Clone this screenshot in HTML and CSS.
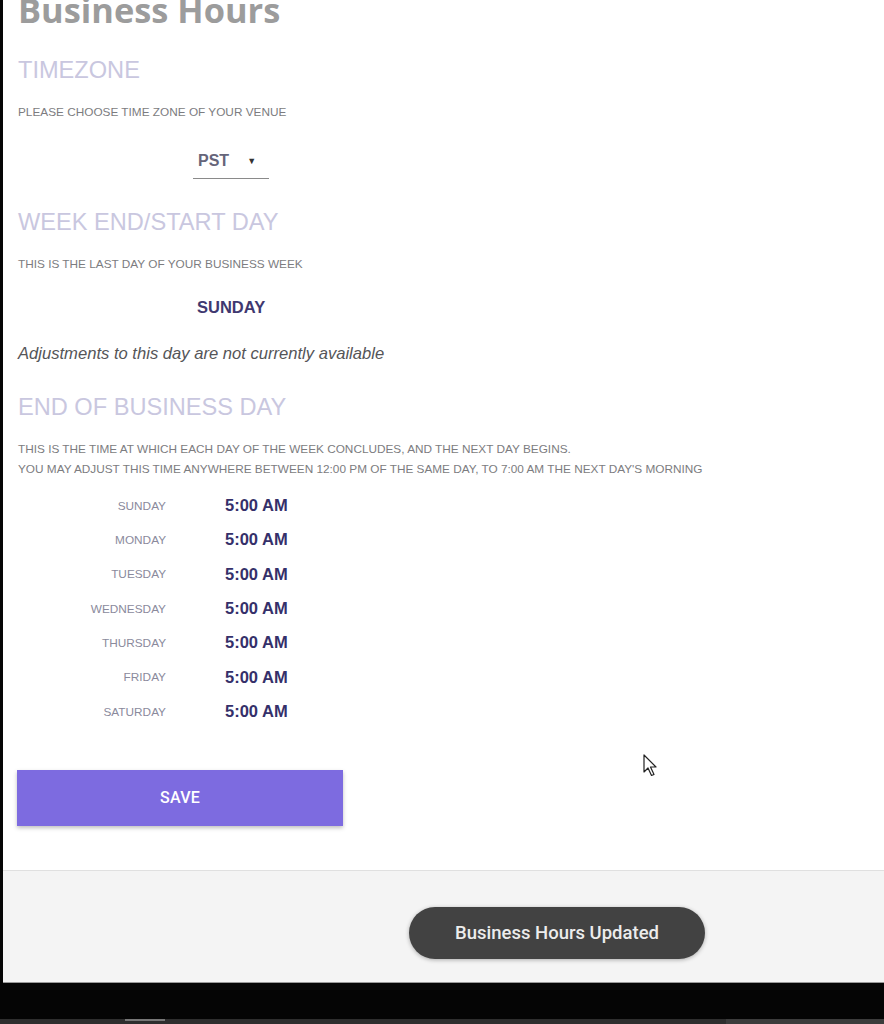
FILE: index.html
```html
<!DOCTYPE html>
<html>

	<head>
		<meta charset="UTF-8">
		<meta name="viewport" content="width=device-width,initial-scale=1" />
		<title>Business Hours</title>
		<link rel="stylesheet" href="styles.css">
	</head>

	<body>
		<div class="screen">
			<div class="content">
				<h1 class="title">Business Hours</h1>

				<h2 class="section-title">TIMEZONE</h2>
				<p class="hint">PLEASE CHOOSE TIME ZONE OF YOUR VENUE</p>
				<div class="select-wrap">
					<div class="select">
						<span>PST</span>
						<span class="arrow">&#9660;</span>
					</div>
				</div>

				<h2 class="section-title">WEEK END/START DAY</h2>
				<p class="hint">THIS IS THE LAST DAY OF YOUR BUSINESS WEEK</p>
				<div class="week-day">SUNDAY</div>
				<p class="note">Adjustments to this day are not currently available</p>

				<h2 class="section-title">END OF BUSINESS DAY</h2>
				<p class="hint">THIS IS THE TIME AT WHICH EACH DAY OF THE WEEK CONCLUDES, AND THE NEXT DAY BEGINS.<br>YOU MAY ADJUST THIS TIME ANYWHERE BETWEEN 12:00 PM OF THE SAME DAY, TO 7:00 AM THE NEXT DAY'S MORNING</p>

				<div class="days">
					<span class="day">SUNDAY</span><span class="time">5:00 AM</span>
					<span class="day">MONDAY</span><span class="time">5:00 AM</span>
					<span class="day">TUESDAY</span><span class="time">5:00 AM</span>
					<span class="day">WEDNESDAY</span><span class="time">5:00 AM</span>
					<span class="day">THURSDAY</span><span class="time">5:00 AM</span>
					<span class="day">FRIDAY</span><span class="time">5:00 AM</span>
					<span class="day">SATURDAY</span><span class="time">5:00 AM</span>
				</div>

				<button class="save">SAVE</button>
			</div>

			<div class="footer">
				<div class="toast">Business Hours Updated</div>
			</div>

			<!-- mouse pointer -->
			<svg class="cursor" width="15" height="23" viewBox="0 0 15 23">
				<path d="M1 1 L1 18 L5 14 L8.5 21.5 L11 20.5 L7.5 13 L13 13 Z" fill="#fff" stroke="#222" stroke-width="1.2" stroke-linejoin="round" />
			</svg>
		</div>

		<div class="taskbar">
			<span class="tab"></span>
			<span class="tab-right"></span>
		</div>
	</body>

</html>
```

FILE: styles.css
```css
* {
	margin: 0;
	padding: 0;
	box-sizing: border-box;
}

body {
	background: #050505;
	width: 884px;
	height: 1024px;
	overflow: hidden;
	font-family: "Liberation Sans", Arial, sans-serif;
}

.screen {
	position: relative;
	margin-left: 3px;
	background: #FFFFFF;
}

.content {
	padding: 0 15px 44px;
}

.title {
	margin-top: -8px;
	font-family: "Open Sans", sans-serif;
	font-size: 34.4px;
	line-height: 35px;
	font-weight: 700;
	color: #9c9c9c;
}

.section-title {
	margin-top: 29px;
	font-size: 23.6px;
	line-height: 28px;
	font-weight: 400;
	color: #c9c7df;
}

.hint {
	margin-top: 18px;
	font-size: 11.8px;
	line-height: 20px;
	color: #7c7c80;
}

.select-wrap {
	margin-top: 28.5px;
	padding-left: 175px;
}

.select {
	display: flex;
	align-items: center;
	width: 76px;
	padding: 0 0 7px 5px;
	border-bottom: 1.5px solid #8a8a8a;
	font-size: 16px;
	line-height: 20px;
	font-weight: 700;
	color: #66657a;
}

.select .arrow {
	margin-left: 18px;
	font-size: 9px;
	color: #333;
}

.week-day {
	margin-top: 23.5px;
	padding-left: 179px;
	font-size: 16.5px;
	line-height: 20px;
	font-weight: 700;
	color: #3f3870;
}

.note {
	margin-top: 27px;
	font-size: 16.6px;
	line-height: 20px;
	font-style: italic;
	color: #555558;
}

.days {
	display: grid;
	grid-template-columns: 148px auto;
	grid-auto-rows: 34.33px;
	column-gap: 59px;
	align-items: center;
	margin-top: 9.5px;
	width: 300px;
}

.day {
	text-align: right;
	font-size: 11.8px;
	color: #8a8a9c;
}

.time {
	font-size: 16.5px;
	font-weight: 700;
	color: #35306a;
}

.save {
	display: block;
	margin-top: 41px;
	margin-left: -1px;
	width: 326px;
	height: 56px;
	border: none;
	background: #7d6be0;
	color: #FFFFFF;
	font-family: Roboto, sans-serif;
	font-size: 16px;
	font-weight: 500;
	letter-spacing: 0.3px;
	box-shadow: 0 2px 4px rgba(0, 0, 0, 0.25);
}

.footer {
	height: 113px;
	padding: 36px 0 0 406px;
	background: #f4f4f4;
	border-top: 1px solid #e0e0e0;
	border-bottom: 1px solid #9a9a9a;
}

.toast {
	width: 296px;
	height: 52px;
	border-radius: 26px;
	background: #424242;
	color: #ececec;
	font-family: Roboto, sans-serif;
	font-size: 18.5px;
	font-weight: 500;
	line-height: 52px;
	text-align: center;
	box-shadow: 0 1px 4px rgba(0, 0, 0, 0.3);
}

.cursor {
	position: absolute;
	left: 640px;
	top: 762px;
}

.taskbar {
	position: relative;
	margin-top: 36px;
	height: 6px;
	background: #2e2e2e;
}

.taskbar .tab {
	position: absolute;
	left: 125px;
	top: 0;
	width: 40px;
	height: 2px;
	background: #777;
}

.taskbar .tab-right {
	position: absolute;
	left: 726px;
	right: 0;
	top: 0;
	height: 6px;
	background: #3c3c3c;
}
```
